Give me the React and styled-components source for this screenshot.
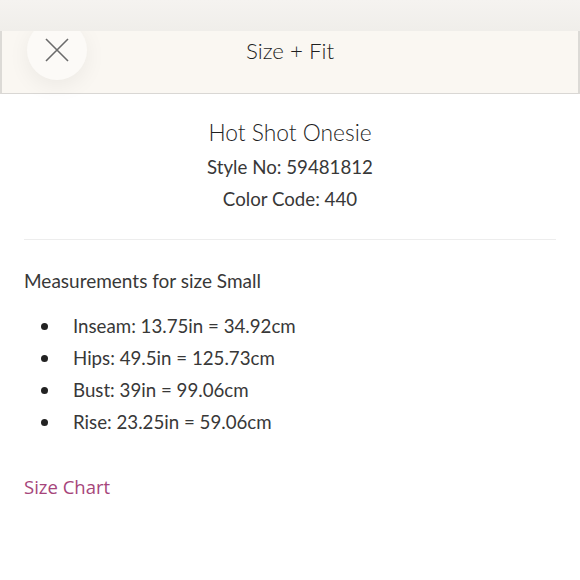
import React from "react";
import styled, { createGlobalStyle } from "styled-components";

const Global = createGlobalStyle`
  html, body { margin: 0; padding: 0; background: #fff; }
  body { font-family: Lato, "Noto Sans", sans-serif; color: #2b2b2b; }
`;

const Page = styled.div`
  width: 580px;
  height: 580px;
  overflow: hidden;
  position: relative;
  background: #fff;
`;

const TopBand = styled.div`
  height: 31px;
  background: linear-gradient(#f5f3f0, #f0eeea);
  position: relative;
  z-index: 2;
`;

const Header = styled.header`
  height: 62px;
  background: #faf7f2;
  border-bottom: 1px solid #d9d7d4;
  border-left: 2px solid #dcdad6;
  border-right: 2px solid #dcdad6;
  display: flex;
  align-items: center;
  justify-content: center;
  position: relative;
`;

const HeaderTitle = styled.h1`
  margin: 0;
  margin-top: -24px;
  font-size: 22.3px;
  font-weight: 300;
  color: #1f1f1f;
`;

const CloseButton = styled.button`
  position: absolute;
  left: 25px;
  top: -11px;
  width: 60px;
  height: 60px;
  border-radius: 50%;
  border: none;
  background: #fcfaf7;
  box-shadow: 0 6px 22px rgba(0, 0, 0, 0.06);
  display: flex;
  align-items: center;
  justify-content: center;
  padding: 0;
`;

const Body = styled.main`
  padding: 0 24px;
`;

const Product = styled.section`
  display: flex;
  flex-direction: column;
  align-items: center;
  padding-top: 23px;
  padding-bottom: 28px;
  border-bottom: 1px solid #ededed;
`;

const ProductName = styled.h2`
  margin: 0;
  font-size: 22.8px;
  font-weight: 300;
  line-height: 30px;
  color: #1f1f1f;
`;

const Meta = styled.p`
  margin: 0;
  margin-top: 8px;
  font-size: 18.7px;
  font-weight: 400;
  line-height: 24px;
  color: #383838;
`;

const SectionTitle = styled.p`
  margin: 0;
  margin-top: 29px;
  font-size: 19px;
  font-weight: 400;
  line-height: 24px;
  color: #383838;
`;

const List = styled.ul`
  list-style: none;
  margin: 21px 0 0;
  padding: 0;
  display: flex;
  flex-direction: column;
  gap: 8px;
`;

const Item = styled.li`
  display: flex;
  align-items: center;
  font-size: 18.7px;
  font-weight: 400;
  line-height: 24px;
  color: #383838;
  &::before {
    content: "";
    width: 7px;
    height: 7px;
    border-radius: 50%;
    background: #222;
    margin-left: 17px;
    margin-right: 25px;
  }
`;

const ChartLink = styled.a`
  display: inline-block;
  margin-top: 41px;
  font-family: "Open Sans", Lato, sans-serif;
  font-size: 18.5px;
  line-height: 24px;
  color: #a6457a;
  text-decoration: none;
`;

const items = [
  "Inseam: 13.75in = 34.92cm",
  "Hips: 49.5in = 125.73cm",
  "Bust: 39in = 99.06cm",
  "Rise: 23.25in = 59.06cm",
];

export default function App() {
  return (
    <Page>
      <Global />
      <TopBand />
      <Header>
        <CloseButton aria-label="close">
          <svg width="24" height="24" viewBox="0 0 24 24">
            <path d="M1 1 L23 23 M23 1 L1 23" stroke="#6b6b6b" strokeWidth="1.6" fill="none" />
          </svg>
        </CloseButton>
        <HeaderTitle>Size + Fit</HeaderTitle>
      </Header>
      <Body>
        <Product>
          <ProductName>Hot Shot Onesie</ProductName>
          <Meta>Style No: 59481812</Meta>
          <Meta>Color Code: 440</Meta>
        </Product>
        <SectionTitle>Measurements for size Small</SectionTitle>
        <List>
          {items.map((t) => (
            <Item key={t}>{t}</Item>
          ))}
        </List>
        <ChartLink href="#">Size Chart</ChartLink>
      </Body>
    </Page>
  );
}
